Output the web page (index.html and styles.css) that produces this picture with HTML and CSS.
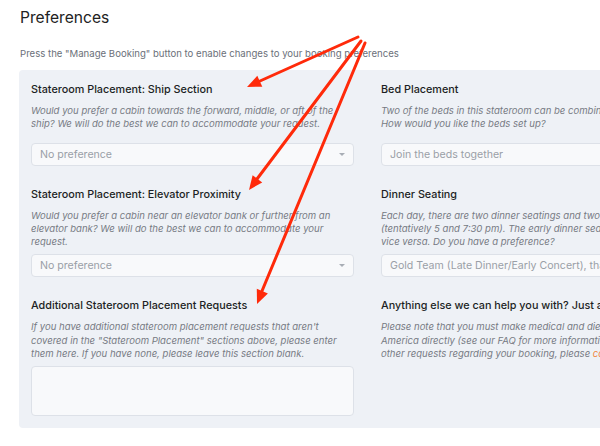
FILE: index.html
```html
<!DOCTYPE html>
<html lang="en">
<head>
  <meta charset="UTF-8">
  <meta name="viewport" content="width=device-width, initial-scale=1.0">
  <title>Preferences</title>
  <link rel="stylesheet" href="styles.css">
</head>
<body>
  <h1 class="title">Preferences</h1>
  <p class="intro">Press the "Manage Booking" button to enable changes to your booking preferences</p>

  <div class="panel">
    <div class="col">
      <div class="field">
        <h3>Stateroom Placement: Ship Section</h3>
        <p class="desc desc-loose">Would you prefer a cabin towards the forward, middle, or aft of the ship? We will do the best we can to accommodate your request.</p>
        <div class="select">No preference<span class="caret"></span></div>
      </div>
      <div class="field">
        <h3>Stateroom Placement: Elevator Proximity</h3>
        <p class="desc">Would you prefer a cabin near an elevator bank or further from an elevator bank? We will do the best we can to accommodate your request.</p>
        <div class="select">No preference<span class="caret"></span></div>
      </div>
      <div class="field">
        <h3>Additional Stateroom Placement Requests</h3>
        <p class="desc">If you have additional stateroom placement requests that aren't covered in the "Stateroom Placement" sections above, please enter them here. If you have none, please leave this section blank.</p>
        <div class="textarea"></div>
      </div>
    </div>

    <div class="col">
      <div class="field">
        <h3>Bed Placement</h3>
        <p class="desc desc-loose">Two of the beds in this stateroom can be combined into one larger bed.<br>How would you like the beds set up?</p>
        <div class="select">Join the beds together<span class="caret"></span></div>
      </div>
      <div class="field">
        <h3>Dinner Seating</h3>
        <p class="desc">Each day, there are two dinner seatings and two concerts<br>(tentatively 5 and 7:30 pm). The early dinner seating attends the late concert and<br>vice versa. Do you have a preference?</p>
        <div class="select">Gold Team (Late Dinner/Early Concert), thank you<span class="caret"></span></div>
      </div>
      <div class="field">
        <h3>Anything else we can help you with? Just ask!</h3>
        <p class="desc">Please note that you must make medical and dietary requests with Holland<br>America directly (see our FAQ for more information). For any<br>other requests regarding your booking, please <a href="#">contact us</a>.</p>
      </div>
    </div>
  </div>

  <svg class="arrows" width="600" height="446" viewBox="0 0 600 446">
    <g stroke="#ff2a0a" stroke-width="3" stroke-linecap="round" fill="none">
      <line x1="358" y1="37" x2="260" y2="81"/>
      <line x1="361" y1="41" x2="257" y2="179"/>
      <line x1="365" y1="43" x2="262" y2="291"/>
    </g>
    <g fill="#ff2a0a">
      <polygon points="247,87 262.3,86.7 257.3,75.8"/>
      <polygon points="249,190 262.2,182.4 252.6,175.2"/>
      <polygon points="257,304 267.9,293.4 256.8,288.8"/>
    </g>
  </svg>
</body>
</html>
```

FILE: styles.css
```css
body {
  margin: 0;
  width: 600px;
  height: 446px;
  overflow: hidden;
  position: relative;
  background: #ffffff;
  font-family: 'Inter', 'Noto Sans', sans-serif;
  color: #1f2328;
}

.title {
  margin: 0;
  padding: 7px 0 0 20px;
  font-size: 15.6px;
  font-weight: 400;
  line-height: 22px;
  color: #222;
}

.intro {
  margin: 18px 0 0 20px;
  font-size: 9.6px;
  line-height: 14px;
  color: #6b7079;
  white-space: nowrap;
}

.panel {
  margin: 9px 0 0 19px;
  width: 720px;
  padding: 12px 12px 12px 12px;
  background: #eef1f6;
  border-radius: 4px;
  display: grid;
  grid-template-columns: 323px 323px;
  column-gap: 27px;
}

.col {
  display: flex;
  flex-direction: column;
  gap: 21px;
}

.field h3 {
  margin: 0;
  font-size: 10.8px;
  font-weight: 500;
  line-height: 16px;
  color: #1c1f24;
  white-space: nowrap;
}

.desc {
  margin: 6px 0 6px;
  font-size: 9.55px;
  font-style: italic;
  line-height: 13.3px;
  color: #767a83;
  white-space: normal;
}

.col:last-child .desc {
  white-space: nowrap;
}

.desc-loose {
  margin-bottom: 12px;
}

.desc a {
  color: #f0833a;
  text-decoration: none;
}

.select {
  position: relative;
  height: 23px;
  box-sizing: border-box;
  padding: 0 8px;
  display: flex;
  align-items: center;
  background: #f8f9fb;
  border: 1px solid #dde1e8;
  border-radius: 4px;
  font-size: 10.6px;
  color: #9a9fa7;
  white-space: nowrap;
}

.caret {
  position: absolute;
  right: 8px;
  top: 9px;
  width: 0;
  height: 0;
  border-left: 3px solid transparent;
  border-right: 3px solid transparent;
  border-top: 3px solid #a8adb5;
}

.textarea {
  height: 50px;
  box-sizing: border-box;
  background: #f8f9fb;
  border: 1px solid #dde1e8;
  border-radius: 4px;
}

.arrows {
  position: absolute;
  top: 0;
  left: 0;
  pointer-events: none;
}
```
